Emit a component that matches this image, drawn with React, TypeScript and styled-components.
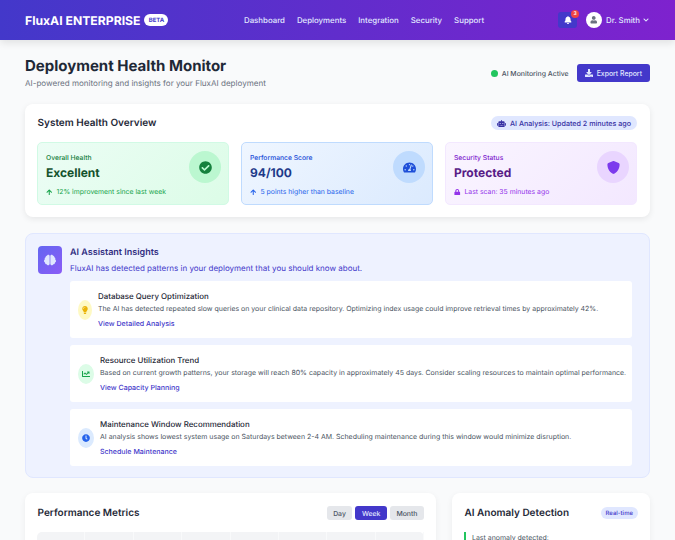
import React from "react";
import styled, { createGlobalStyle } from "styled-components";
import {
  FaArrowUp,
  FaBell,
  FaBrain,
  FaChartLine,
  FaCheckCircle,
  FaChevronDown,
  FaClock,
  FaDownload,
  FaLightbulb,
  FaLock,
  FaRobot,
  FaTachometerAlt,
  FaUser,
} from "react-icons/fa";
import { FaShield } from "react-icons/fa6";

const GlobalStyle = createGlobalStyle`
  html, body {
    margin: 0;
    height: 100%;
    overflow: hidden;
    background: #f9fafb;
    font-family: Inter, "Liberation Sans", sans-serif;
    color: #1f2937;
    text-rendering: geometricPrecision;
  }
  * { box-sizing: border-box; }
`;

const tones = {
  green: {
    bg: "linear-gradient(135deg, #ecfdf5, #dcfce7)",
    border: "#d1fae5",
    label: "#15803d",
    value: "#14532d",
    note: "#16a34a",
    circle: "#bbf7d0",
    icon: "#15803d",
  },
  blue: {
    bg: "linear-gradient(135deg, #eff6ff, #dbeafe)",
    border: "#bfdbfe",
    label: "#1d4ed8",
    value: "#1e3a8a",
    note: "#2563eb",
    circle: "#bfdbfe",
    icon: "#1d4ed8",
  },
  purple: {
    bg: "linear-gradient(135deg, #faf5ff, #f3e8ff)",
    border: "#f3e8ff",
    label: "#7e22ce",
    value: "#581c87",
    note: "#9333ea",
    circle: "#e9d5ff",
    icon: "#7c3aed",
  },
};

type Tone = keyof typeof tones;

const stats: {
  tone: Tone;
  label: string;
  value: string;
  note: string;
  icon: React.ReactNode;
  noteIcon: React.ReactNode;
}[] = [
  { tone: "green", label: "Overall Health", value: "Excellent", note: "12% improvement since last week", icon: <FaCheckCircle />, noteIcon: <FaArrowUp /> },
  { tone: "blue", label: "Performance Score", value: "94/100", note: "5 points higher than baseline", icon: <FaTachometerAlt />, noteIcon: <FaArrowUp /> },
  { tone: "purple", label: "Security Status", value: "Protected", note: "Last scan: 35 minutes ago", icon: <FaShield />, noteIcon: <FaLock /> },
];

const insights = [
  {
    title: "Database Query Optimization",
    text: "The AI has detected repeated slow queries on your clinical data repository. Optimizing index usage could improve retrieval times by approximately 42%.",
    link: "View Detailed Analysis",
    icon: <FaLightbulb />,
    bg: "#fef9c3",
    color: "#eab308",
    width: 14,
  },
  {
    title: "Resource Utilization Trend",
    text: "Based on current growth patterns, your storage will reach 80% capacity in approximately 45 days. Consider scaling resources to maintain optimal performance.",
    link: "View Capacity Planning",
    icon: <FaChartLine />,
    bg: "#dcfce7",
    color: "#16a34a",
    width: 16,
  },
  {
    title: "Maintenance Window Recommendation",
    text: "AI analysis shows lowest system usage on Saturdays between 2-4 AM. Scheduling maintenance during this window would minimize disruption.",
    link: "Schedule Maintenance",
    icon: <FaClock />,
    bg: "#dbeafe",
    color: "#2563eb",
    width: 16,
  },
];

const App = () => (
  <>
    <GlobalStyle />
    <Header>
      <Brand>
        <Logo>FluxAI ENTERPRISE</Logo>
        <Beta>BETA</Beta>
      </Brand>
      <Nav>
        {["Dashboard", "Deployments", "Integration", "Security", "Support"].map((item) => (
          <NavLink key={item}>{item}</NavLink>
        ))}
      </Nav>
      <HeaderRight>
        <BellButton>
          <FaBell />
          <BellCount>3</BellCount>
        </BellButton>
        <UserMenu>
          <Avatar>
            <FaUser />
          </Avatar>
          Dr. Smith
          <FaChevronDown size={6} />
        </UserMenu>
      </HeaderRight>
    </Header>

    <Main>
      <TitleRow>
        <div>
          <PageTitle>Deployment Health Monitor</PageTitle>
          <PageSub>AI-powered monitoring and insights for your FluxAI deployment</PageSub>
        </div>
        <TitleActions>
          <Status>
            <StatusDot />
            AI Monitoring Active
          </Status>
          <ExportButton>
            <FaDownload size={8} />
            Export Report
          </ExportButton>
        </TitleActions>
      </TitleRow>

      <Card>
        <CardHead>
          <CardTitle>System Health Overview</CardTitle>
          <AnalysisPill>
            <FaRobot size={9} />
            AI Analysis: Updated 2 minutes ago
          </AnalysisPill>
        </CardHead>
        <StatGrid>
          {stats.map((s) => (
            <StatCard key={s.label} $tone={s.tone}>
              <div>
                <StatLabel $tone={s.tone}>{s.label}</StatLabel>
                <StatValue $tone={s.tone}>{s.value}</StatValue>
                <StatNote $tone={s.tone}>
                  {s.noteIcon}
                  {s.note}
                </StatNote>
              </div>
              <StatCircle $tone={s.tone}>{s.icon}</StatCircle>
            </StatCard>
          ))}
        </StatGrid>
      </Card>

      <InsightsPanel>
        <BrainBox>
          <FaBrain />
        </BrainBox>
        <InsightsBody>
          <InsightsTitle>AI Assistant Insights</InsightsTitle>
          <InsightsSub>FluxAI has detected patterns in your deployment that you should know about.</InsightsSub>
          <InsightList>
            {insights.map((i) => (
              <InsightItem key={i.title}>
                <InsightIcon $bg={i.bg} $color={i.color} $width={i.width}>
                  {i.icon}
                </InsightIcon>
                <div>
                  <InsightTitle>{i.title}</InsightTitle>
                  <InsightText>{i.text}</InsightText>
                  <InsightLink>{i.link}</InsightLink>
                </div>
              </InsightItem>
            ))}
          </InsightList>
        </InsightsBody>
      </InsightsPanel>

      <BottomGrid>
        <BottomCard>
          <CardHead>
            <CardTitle>Performance Metrics</CardTitle>
            <Tabs>
              <Tab>Day</Tab>
              <Tab $active>Week</Tab>
              <Tab>Month</Tab>
            </Tabs>
          </CardHead>
          <Chart>
            {[0, 1, 2, 3, 4, 5, 6, 7].map((n) => (
              <ChartCell key={n} />
            ))}
          </Chart>
        </BottomCard>
        <BottomCard>
          <CardHead>
            <CardTitle>AI Anomaly Detection</CardTitle>
            <RealTime>Real-time</RealTime>
          </CardHead>
          <Anomaly>Last anomaly detected:</Anomaly>
        </BottomCard>
      </BottomGrid>
    </Main>
  </>
);

const Header = styled.header`
  height: 40px;
  padding: 0 26px 0 25px;
  display: flex;
  align-items: center;
  background: linear-gradient(90deg, #4338ca, #7e22ce);
  box-shadow: 0 3px 8px rgba(0, 0, 0, 0.1);
`;

const Brand = styled.div`
  display: flex;
  align-items: center;
  gap: 4px;
  width: 219px;
`;

const Logo = styled.span`
  font-size: 12.2px;
  font-weight: 700;
  color: #fff;
`;

const Beta = styled.span`
  width: 24px;
  height: 12px;
  border-radius: 6px;
  background: #fff;
  color: #4338ca;
  font-size: 6px;
  font-weight: 700;
  display: flex;
  align-items: center;
  justify-content: center;
`;

const Nav = styled.nav`
  display: flex;
  gap: 12px;
`;

const NavLink = styled.span`
  font-size: 7.85px;
  font-weight: 500;
  color: #e0e7ff;
`;

const HeaderRight = styled.div`
  margin-left: auto;
  display: flex;
  align-items: center;
  gap: 8.5px;
`;

const BellButton = styled.div`
  position: relative;
  width: 19px;
  height: 16px;
  border-radius: 3px;
  background: #4338ca;
  color: #fff;
  font-size: 8px;
  display: flex;
  align-items: center;
  justify-content: center;
`;

const BellCount = styled.span`
  position: absolute;
  top: -2px;
  right: -2px;
  width: 8px;
  height: 8px;
  border-radius: 50%;
  background: #ef4444;
  color: #fff;
  font-size: 5px;
  font-weight: 600;
  display: flex;
  align-items: center;
  justify-content: center;
`;

const UserMenu = styled.div`
  display: flex;
  align-items: center;
  gap: 3px;
  font-size: 7.85px;
  font-weight: 500;
  color: #e0e7ff;
`;

const Avatar = styled.span`
  width: 16.5px;
  height: 16.5px;
  border-radius: 50%;
  background: #fff;
  color: #6b7280;
  font-size: 7.5px;
  display: flex;
  align-items: center;
  justify-content: center;
  margin-right: 1px;
`;

const Main = styled.main`
  padding: 16px 25px 0;
`;

const TitleRow = styled.div`
  display: flex;
  align-items: center;
  justify-content: space-between;
  margin-bottom: 14px;
`;

const PageTitle = styled.h1`
  margin: 0;
  font-size: 15px;
  line-height: 20px;
  font-weight: 700;
  color: #1f2937;
`;

const PageSub = styled.p`
  margin: 0;
  font-size: 8.05px;
  line-height: 14px;
  color: #6b7280;
`;

const TitleActions = styled.div`
  display: flex;
  align-items: center;
  gap: 8px;
`;

const Status = styled.div`
  display: flex;
  align-items: center;
  gap: 4px;
  font-size: 6.9px;
  font-weight: 500;
  color: #4b5563;
`;

const StatusDot = styled.span`
  width: 7px;
  height: 7px;
  border-radius: 50%;
  background: #22c55e;
`;

const ExportButton = styled.button`
  height: 18px;
  padding: 0 8px;
  border: 0;
  border-radius: 3px;
  background: #4338ca;
  color: #e0e7ff;
  font: 500 6.9px Inter, sans-serif;
  display: flex;
  align-items: center;
  gap: 4px;
`;

const Card = styled.section`
  height: 113px;
  padding: 12px 13px 12px 12px;
  border-radius: 8px;
  background: #fff;
  box-shadow: 0 2px 6px rgba(0, 0, 0, 0.08);
`;

const CardHead = styled.div`
  display: flex;
  align-items: center;
  justify-content: space-between;
  height: 14px;
  margin-bottom: 12px;
`;

const CardTitle = styled.h2`
  margin: 0;
  padding-left: 0.5px;
  font-size: 10px;
  font-weight: 600;
  color: #1f2937;
`;

const AnalysisPill = styled.div`
  height: 14px;
  padding: 0 6px;
  border-radius: 7px;
  background: #e0e7ff;
  color: #3730a3;
  font-size: 7.15px;
  font-weight: 500;
  display: flex;
  align-items: center;
  gap: 4px;
`;

const StatGrid = styled.div`
  display: grid;
  grid-template-columns: repeat(3, 1fr);
  gap: 12px;
`;

const StatCard = styled.div<{ $tone: Tone }>`
  height: 63px;
  padding: 8px 7px 8px 8px;
  border-radius: 5px;
  border: 1px solid ${({ $tone }) => tones[$tone].border};
  background: ${({ $tone }) => tones[$tone].bg};
  display: flex;
  align-items: flex-start;
  justify-content: space-between;
`;

const StatLabel = styled.div<{ $tone: Tone }>`
  margin-top: 2px;
  font-size: 6.75px;
  font-weight: 500;
  line-height: 10px;
  color: ${({ $tone }) => tones[$tone].label};
`;

const StatValue = styled.div<{ $tone: Tone }>`
  margin-top: 1px;
  font-size: 12px;
  line-height: 17px;
  font-weight: 700;
  color: ${({ $tone }) => tones[$tone].value};
`;

const StatNote = styled.div<{ $tone: Tone }>`
  margin-top: 6px;
  font-size: 6.85px;
  line-height: 10px;
  color: ${({ $tone }) => tones[$tone].note};
  display: flex;
  align-items: center;
  gap: 4px;

  svg {
    font-size: 6.5px;
  }
`;

const StatCircle = styled.div<{ $tone: Tone }>`
  width: 32px;
  height: 32px;
  border-radius: 50%;
  background: ${({ $tone }) => tones[$tone].circle};
  color: ${({ $tone }) => tones[$tone].icon};
  font-size: 13px;
  display: flex;
  align-items: center;
  justify-content: center;
`;

const InsightsPanel = styled.section`
  margin-top: 16px;
  height: 245px;
  padding: 12px 17px 12px 12px;
  border-radius: 8px;
  border: 1px solid #e0e7ff;
  background: #eef2ff;
  display: flex;
  gap: 8px;
`;

const BrainBox = styled.div`
  flex: none;
  width: 24px;
  height: 28px;
  border-radius: 4px;
  background: linear-gradient(135deg, #6366f1, #8b5cf6);
  color: #e0e7ff;
  font-size: 12px;
  display: flex;
  align-items: center;
  justify-content: center;
`;

const InsightsBody = styled.div`
  flex: 1;
  min-width: 0;
`;

const InsightsTitle = styled.h3`
  margin: 0;
  font-size: 9px;
  line-height: 14px;
  font-weight: 600;
  color: #312e81;
`;

const InsightsSub = styled.p`
  margin: 1px 0 0;
  font-size: 8px;
  line-height: 14px;
  color: #4338ca;
`;

const InsightList = styled.div`
  margin-top: 6px;
  display: flex;
  flex-direction: column;
  gap: 7px;
`;

const InsightItem = styled.div`
  height: 57px;
  padding: 0 8px;
  border-radius: 3px;
  background: #fff;
  display: flex;
  align-items: center;
  gap: 6px;
`;

const InsightIcon = styled.div<{ $bg: string; $color: string; $width: number }>`
  flex: none;
  width: ${({ $width }) => $width}px;
  height: 20px;
  border-radius: 50%;
  background: ${({ $bg }) => $bg};
  color: ${({ $color }) => $color};
  font-size: 8px;
  display: flex;
  align-items: center;
  justify-content: center;
`;

const InsightTitle = styled.div`
  font-size: 7.9px;
  line-height: 13px;
  font-weight: 500;
  color: #1f2937;
`;

const InsightText = styled.p`
  margin: 0;
  font-size: 6.97px;
  line-height: 12px;
  white-space: nowrap;
  color: #4b5563;
`;

const InsightLink = styled.div`
  margin-top: 3px;
  font-size: 7.05px;
  line-height: 12px;
  font-weight: 500;
  color: #4338ca;
`;

const BottomGrid = styled.div`
  margin-top: 15px;
  display: grid;
  grid-template-columns: 411px 198px;
  gap: 16px;
`;

const BottomCard = styled.section`
  padding: 13px 12px 12px;
  border-radius: 8px;
  background: #fff;
  box-shadow: 0 2px 6px rgba(0, 0, 0, 0.06);
`;

const Tabs = styled.div`
  display: flex;
  gap: 3px;
`;

const Tab = styled.span<{ $active?: boolean }>`
  height: 14px;
  padding: 0 6.5px;
  border-radius: 3px;
  background: ${({ $active }) => ($active ? "#4338ca" : "#e5e7eb")};
  color: ${({ $active }) => ($active ? "#e0e7ff" : "#4b5563")};
  font-size: 6.9px;
  font-weight: 500;
  display: flex;
  align-items: center;
`;

const Chart = styled.div`
  height: 160px;
  border-radius: 5px;
  background: #f3f4f6;
  display: grid;
  grid-template-columns: repeat(8, 1fr);
`;

const ChartCell = styled.div`
  border-right: 1px solid #f9fafb;
`;

const RealTime = styled.span`
  height: 12px;
  padding: 0 5px;
  border-radius: 6px;
  background: #e0e7ff;
  color: #4338ca;
  font-size: 6px;
  font-weight: 500;
  display: flex;
  align-items: center;
`;

const Anomaly = styled.div`
  padding: 1px 0 40px 6px;
  border-left: 2px solid #22c55e;
  font-size: 6.97px;
  color: #4b5563;
`;

export default App;
